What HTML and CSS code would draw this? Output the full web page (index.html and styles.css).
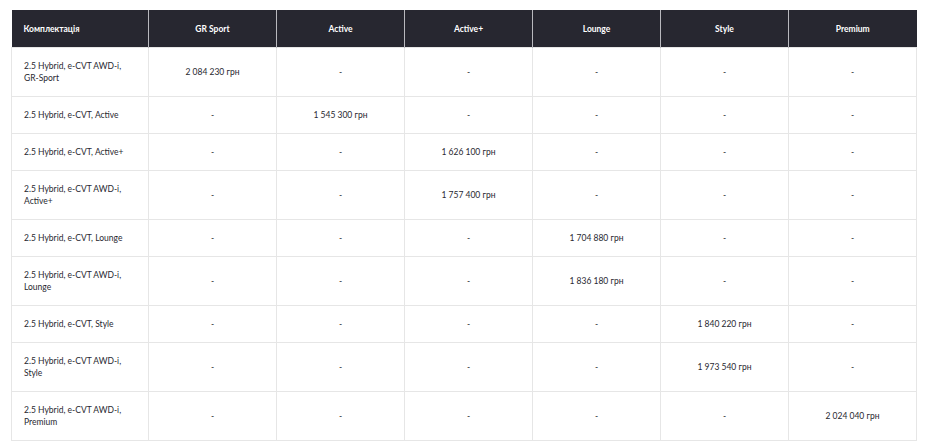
FILE: index.html
```html
<!DOCTYPE html>
<html lang="uk">
<head>
<meta charset="utf-8">
<title>Комплектація</title>
<link rel="stylesheet" href="styles.css">
</head>
<body>
<div class="wrap">
<table class="prices">
<colgroup><col class="c-first"><col class="c"><col class="c"><col class="c"><col class="c"><col class="c"><col class="c"></colgroup>
<thead>
<tr><th class="first">Комплектація</th><th>GR Sport</th><th>Active</th><th>Active+</th><th>Lounge</th><th>Style</th><th>Premium</th></tr>
</thead>
<tbody>
<tr><td class="first">2.5 Hybrid, e-CVT AWD-i,<br>GR-Sport</td><td>2 084 230 грн</td><td>-</td><td>-</td><td>-</td><td>-</td><td>-</td></tr>
<tr><td class="first">2.5 Hybrid, e-CVT, Active</td><td>-</td><td>1 545 300 грн</td><td>-</td><td>-</td><td>-</td><td>-</td></tr>
<tr><td class="first">2.5 Hybrid, e-CVT, Active+</td><td>-</td><td>-</td><td>1 626 100 грн</td><td>-</td><td>-</td><td>-</td></tr>
<tr><td class="first">2.5 Hybrid, e-CVT AWD-i,<br>Active+</td><td>-</td><td>-</td><td>1 757 400 грн</td><td>-</td><td>-</td><td>-</td></tr>
<tr><td class="first">2.5 Hybrid, e-CVT, Lounge</td><td>-</td><td>-</td><td>-</td><td>1 704 880 грн</td><td>-</td><td>-</td></tr>
<tr><td class="first">2.5 Hybrid, e-CVT AWD-i,<br>Lounge</td><td>-</td><td>-</td><td>-</td><td>1 836 180 грн</td><td>-</td><td>-</td></tr>
<tr><td class="first">2.5 Hybrid, e-CVT, Style</td><td>-</td><td>-</td><td>-</td><td>-</td><td>1 840 220 грн</td><td>-</td></tr>
<tr><td class="first">2.5 Hybrid, e-CVT AWD-i,<br>Style</td><td>-</td><td>-</td><td>-</td><td>-</td><td>1 973 540 грн</td><td>-</td></tr>
<tr><td class="first">2.5 Hybrid, e-CVT AWD-i,<br>Premium</td><td>-</td><td>-</td><td>-</td><td>-</td><td>-</td><td>2 024 040 грн</td></tr>
</tbody>
</table>
</div>
</body>
</html>
```
FILE: styles.css
```css
html, body {
  margin: 0;
  padding: 0;
  background: #ffffff;
}
.wrap {
  padding: 10px 0 0 11px;
}
.prices {
  border-collapse: collapse;
  table-layout: fixed;
  width: 906px;
  font-family: Lato, "Noto Sans", sans-serif;
  font-size: 8.5px;
  line-height: 12px;
  color: #282830;
}
.c-first { width: 137px; }
.c { width: 128px; }
.prices th {
  background: #272730;
  color: #ffffff;
  font-weight: 700;
  height: 37px;
  padding: 2px 12px 0;
  text-align: center;
  border-left: 1px solid #b9b9be;
  box-sizing: border-box;
}
.prices th:first-child { border-left: none; }
.prices th.first { text-align: left; }
.prices td {
  padding: 12px 12px;
  text-align: center;
  border: 1px solid #e6e6e6;
}
.prices td.first { text-align: left; }
```
